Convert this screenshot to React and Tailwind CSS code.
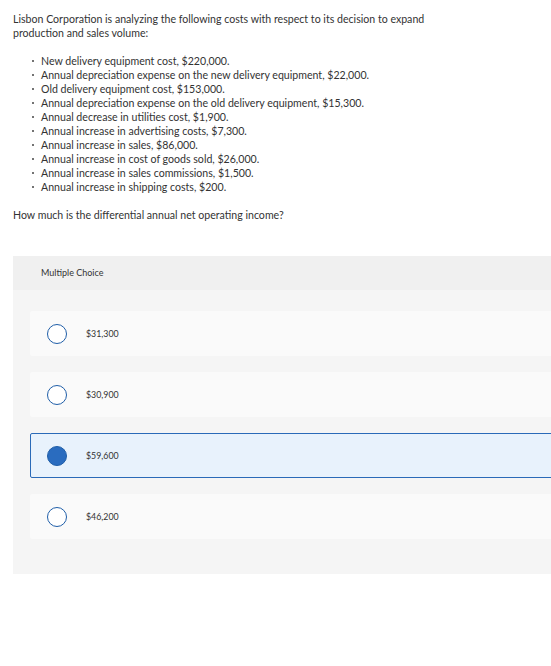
import React from "react";

const items = [
  "New delivery equipment cost, $220,000.",
  "Annual depreciation expense on the new delivery equipment, $22,000.",
  "Old delivery equipment cost, $153,000.",
  "Annual depreciation expense on the old delivery equipment, $15,300.",
  "Annual decrease in utilities cost, $1,900.",
  "Annual increase in advertising costs, $7,300.",
  "Annual increase in sales, $86,000.",
  "Annual increase in cost of goods sold, $26,000.",
  "Annual increase in sales commissions, $1,500.",
  "Annual increase in shipping costs, $200.",
];

const options = [
  { label: "$31,300", selected: false },
  { label: "$30,900", selected: false },
  { label: "$59,600", selected: true },
  { label: "$46,200", selected: false },
];

export default function App() {
  return (
    <div
      className="w-[551px] h-[666px] overflow-hidden bg-white text-[#333333]"
      style={{ fontFamily: "Lato, 'Open Sans', sans-serif" }}
    >
      <div className="pt-[12px] pl-[13px] text-[10.6px] leading-[14px]">
        <p>
          Lisbon Corporation is analyzing the following costs with respect to its decision to expand
          <br />
          production and sales volume:
        </p>
        <ul className="mt-[14px]">
          {items.map((t) => (
            <li key={t} className="flex items-center">
              <span className="ml-[19px] mr-[7px] w-[2px] h-[2px] rounded-full bg-[#444]" />
              <span>{t}</span>
            </li>
          ))}
        </ul>
        <p className="mt-[14px]">How much is the differential annual net operating income?</p>
      </div>

      <div className="ml-[13px] mt-[34px] w-[560px] bg-[#f5f5f5]">
        <div className="h-[34px] bg-[#f0f0f0] flex items-center pl-[28px] text-[9px]">
          Multiple Choice
        </div>
        <div className="pt-[21px] pb-[35px] pl-[17px] flex flex-col gap-[16px]">
          {options.map((o) => (
            <div
              key={o.label}
              className={
                o.selected
                  ? "h-[45px] flex items-center bg-[#e8f2fc] border border-[#2a6ab8] rounded-[2px] pl-[16px]"
                  : "h-[45px] flex items-center bg-[#fafafa] rounded-[2px] pl-[17px]"
              }
            >
              <span
                className={
                  o.selected
                    ? "w-[20px] h-[20px] rounded-full bg-[#2a6cbf] border-[1.5px] border-[#1f5ea8]"
                    : "w-[20px] h-[20px] rounded-full bg-white border-[1.5px] border-[#1f5ea8]"
                }
              />
              <span className="ml-[19px] text-[8.8px]">{o.label}</span>
            </div>
          ))}
        </div>
      </div>
    </div>
  );
}
